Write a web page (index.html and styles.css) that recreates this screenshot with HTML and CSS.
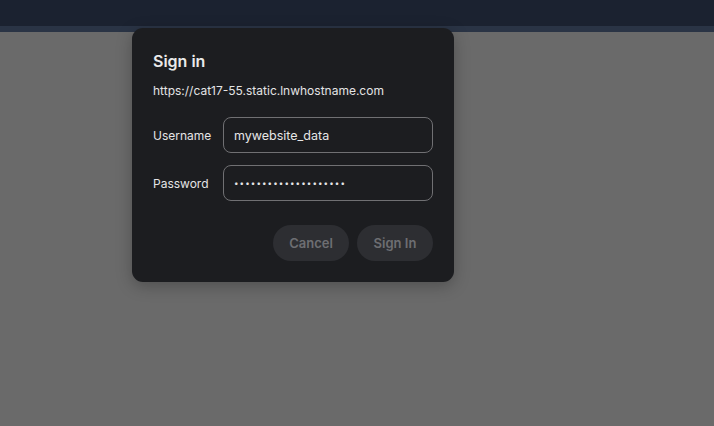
FILE: index.html
```html
<!DOCTYPE html>
<html lang="en">
<head>
    <meta charset="UTF-8">
    <title>Sign in</title>
    <link rel="stylesheet" href="styles.css">
</head>
<body>

    <div class="top-bar"></div>
    <div class="top-strip"></div>

    <div class="dialog">
        <div class="dialog-title">Sign in</div>
        <div class="dialog-url">https://cat17-55.static.lnwhostname.com</div>

        <div class="field-row">
            <label class="field-label" for="username">Username</label>
            <input class="field-input" id="username" type="text" value="mywebsite_data">
        </div>
        <div class="field-row">
            <label class="field-label" for="password">Password</label>
            <input class="field-input password" id="password" type="password" value="xxxxxxxxxxxxxxxxxxxx">
        </div>

        <div class="button-row">
            <div class="dialog-button">Cancel</div>
            <div class="dialog-button">Sign In</div>
        </div>
    </div>

</body>
</html>
```

FILE: styles.css
```css
  body {
      margin: 0;
      background-color: #6a6a6a;
      font-family: Inter, "Noto Sans", sans-serif;
      height: 426px;
      overflow: hidden;
      position: relative;
  }

  .top-bar {
      height: 26px;
      background-color: #1b2230;
  }

  .top-strip {
      height: 6px;
      background-color: #2a3445;
  }

  .dialog {
      position: absolute;
      top: 28px;
      left: 132px;
      width: 322px;
      box-sizing: border-box;
      padding: 23px 21px 21px 21px;
      background-color: #1c1d20;
      border-radius: 11px;
      box-shadow: 0 4px 16px rgba(0, 0, 0, 0.25);
  }

  .dialog-title {
      font-size: 16px;
      line-height: 20px;
      font-weight: 600;
      color: #e9e9ea;
  }

  .dialog-url {
      margin-top: 12px;
      font-size: 12px;
      line-height: 16px;
      color: #e4e4e5;
  }

  .field-row {
      display: flex;
      align-items: center;
      margin-top: 12px;
  }

  .dialog-url + .field-row {
      margin-top: 18px;
  }

  .field-label {
      width: 70px;
      font-size: 12px;
      color: #e4e4e5;
  }

  .field-input {
      width: 210px;
      height: 36px;
      box-sizing: border-box;
      padding: 0 10px;
      background-color: #1c1d20;
      border: 1px solid #707073;
      border-radius: 8px;
      color: #e6e6e7;
      font-family: Inter, "Noto Sans", sans-serif;
      font-size: 12.5px;
      outline: none;
  }

  .field-input.password {
      font-size: 8px;
      letter-spacing: 1.1px;
  }

  .button-row {
      display: flex;
      justify-content: flex-end;
      gap: 8px;
      margin-top: 24px;
  }

  .dialog-button {
      width: 76px;
      height: 36px;
      line-height: 36px;
      border-radius: 18px;
      background-color: #2d2e32;
      color: #6d6e72;
      font-size: 13px;
      font-weight: 600;
      text-align: center;
  }
```
